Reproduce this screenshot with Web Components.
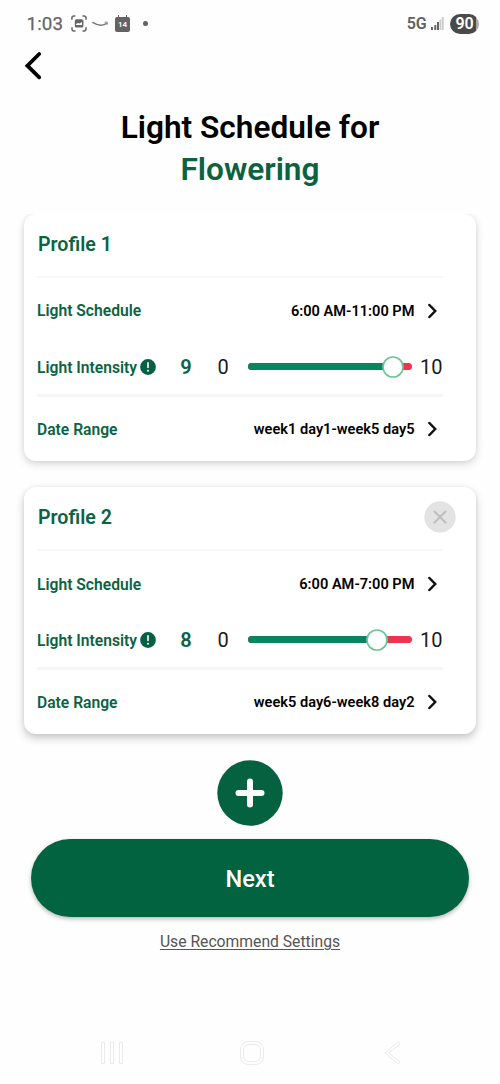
<!DOCTYPE html>
<html lang="en">
<head>
<meta charset="utf-8">
<title>Light Schedule</title>
<style>
html,body{margin:0;background:#fefefe}
body{font-family:Roboto,"Liberation Sans",sans-serif;color:#000}
</style>
</head>
<body>
<light-app></light-app>
<script>
const define = (name, html, setup) => customElements.define(name, class extends HTMLElement {
  constructor() {
    super();
    const t = document.createElement('template');
    t.innerHTML = html;
    this.attachShadow({mode: 'open'}).appendChild(t.content.cloneNode(true));
  }
  connectedCallback() { if (setup) setup(this, this.shadowRoot); }
});

define('status-bar', `<style>
:host{display:flex;box-sizing:border-box;height:47px;padding:0 21px 0 26.500px;align-items:center;color:#666}
.time{font-size:18.800px;line-height:20px;width:44.500px;letter-spacing:.1px;white-space:nowrap;-webkit-text-stroke:.25px #666}
svg{display:block;flex:none}
.net{margin-left:auto;font-size:16px;font-weight:600;line-height:20px;letter-spacing:-.2px;color:#606060}
.cal{display:flex;flex:none;box-sizing:border-box;width:15px;height:15px;margin:1px 0 0 6px;padding-top:1px;border-radius:2px;background:#636363;color:#fff;font-size:8px;font-weight:600;align-items:center;justify-content:center;position:relative}
.cal::before{content:"";position:absolute;left:3px;right:3px;top:-1.5px;height:2px;border:solid #636363;border-width:0 1.5px}
.dot{width:5.500px;height:5.500px;border-radius:50%;background:#636363;margin-left:12.500px}
.bat{display:flex;flex:none;box-sizing:border-box;width:29px;height:20px;margin-left:6px;border-radius:10px;background:linear-gradient(90deg,#4a4a4a 26px,#aaa 26px);color:#fff;font-size:16px;font-weight:600;align-items:center;justify-content:center;letter-spacing:-.1px}
</style>
<span class="time">1:03</span>
<svg width="16" height="17" viewBox="0 0 16 17" fill="none" stroke="#666" stroke-width="1.5" stroke-linecap="round"><path d="M.9 4.2V3q0-2 2-2h1M12 1h1q2 0 2 2v1.2M15 12.8V14q0 2-2 2h-1M4 16H3q-2 0-2-2v-1.2"/><rect x="3.8" y="4.2" width="8.6" height="8.4" rx="1.5" fill="#666" stroke="none"/><path d="M5 10V9l2-1 1.7.5L11 7v3z" fill="#fff" stroke="none"/></svg>
<svg style="margin-left:5px" width="17" height="7" viewBox="0 0 17 7" fill="none" stroke="#777" stroke-linecap="round"><path d="M.8 2.400Q8 7.4 14.3 3.6" stroke-width="1.4"/><path d="M13 2.200q3.800-1.200 2.200 2.200" stroke-width=".9"/></svg>
<span class="cal">14</span><span class="dot"></span>
<span class="net">5G</span>
<svg style="margin-left:4.500px" width="13" height="13" viewBox="0 0 13 13"><path d="M0 10h2v3H0zM3.300 8h2v5h-2zM6 5h2v8H6z" fill="#666"/><path d="M8.500 2.500h1.700V13H8.500zM10.800 0h1.900v13h-1.900z" fill="#ccc"/></svg>
<span class="bat">90</span>`);

define('back-bar', `<style>:host{display:flex;height:54px;padding-left:24px}svg{display:block;margin-top:4px}</style>
<svg width="20" height="30" viewBox="0 0 20 30" fill="none" stroke="#000" stroke-width="3.800" stroke-linecap="round" stroke-linejoin="miter"><path d="M15.200 3L3.400 14.700 15.200 26.300"/></svg>`);

define('page-title', `<style>
:host{display:block;height:113px;padding-top:5.500px;box-sizing:border-box;text-align:center;font-size:31.600px;font-weight:600;line-height:42.400px;white-space:nowrap}
.s{color:#0a6241;display:block}.m{display:block}</style>
<span class="m"><slot></slot></span><span class="s"><slot name="stage"></slot></span>`);

define('icon-chevron', `<style>:host{display:block;width:10px;height:16px;flex:none}svg{display:block}</style>
<svg width="10" height="16" viewBox="0 0 10 16" fill="none" stroke="#111" stroke-width="2.500" stroke-linecap="round"><path d="M1.400 2L7.200 8 1.400 14"/></svg>`);

define('intensity-slider', `<style>
:host{display:block;width:164px;height:22px;flex:none;position:relative}
.track{height:7px;margin-top:7.500px;border-radius:4px;overflow:hidden;background:#ec3350}
.fill{height:7px;background:#068560}
.thumb{position:absolute;top:0;left:0}
</style><div style="display:flow-root"><div class="track"><div class="fill"></div></div></div>
<svg class="thumb" width="22" height="22" viewBox="0 0 22 22"><circle cx="11" cy="11" r="10" fill="#fff" stroke="#6cc596" stroke-width="1.700"/></svg>`,
(el, r) => {
  const x = 16.400 + (el.getAttribute('value') - 1) * 16.050;
  r.querySelector('.fill').style.width = x + 'px';
  r.querySelector('.thumb').style.left = x - 11 + 'px';
});

define('setting-row', `<style>
:host{display:flex;align-items:center;height:65.500px;width:406px}
.l{color:#0b6344;font-size:15.650px;font-weight:600;white-space:nowrap}
.v{margin-left:auto;font-size:14.600px;font-weight:600;white-space:nowrap}
icon-chevron{margin:0 5px 0 13.500px}
</style><span class="l"><slot name="label"></slot></span><span class="v"><slot></slot></span><icon-chevron></icon-chevron>`);

define('intensity-row', `<style>
:host{display:flex;align-items:center;height:46px;width:406px;margin-bottom:4.500px}
.l{color:#0b6344;font-size:15.650px;font-weight:600;white-space:nowrap;width:103px;padding-top:1px}
.i{display:block;flex:none}
.n{width:30px;margin-left:15px;padding-top:1px;text-align:center;font-size:20px;font-weight:600;color:#0b6344}
.z{width:20px;margin-left:12px;padding-top:1px;text-align:center;font-size:20px;color:#1b1b1b}
.t{font-size:20px;color:#1b1b1b;margin-left:8px;padding-top:1px}
intensity-slider{margin-left:15px}
</style><span class="l">Light Intensity</span>
<svg class="i" width="16" height="16" viewBox="0 0 16 16"><circle cx="8" cy="8" r="7.900" fill="#066141"/><path d="M8 3.800v4.600" stroke="#fff" stroke-width="1.600" stroke-linecap="round"/><circle cx="8" cy="11.700" r="1" fill="#fff"/></svg>
<span class="n"></span><span class="z">0</span><intensity-slider></intensity-slider><span class="t">10</span>`,
(el, r) => {
  const v = el.getAttribute('value');
  r.querySelector('.n').textContent = v;
  const old = r.querySelector('intensity-slider');
  const s = document.createElement('intensity-slider');
  s.setAttribute('value', v);
  old.replaceWith(s);
});

define('profile-card', `<style>
:host{display:block;box-sizing:border-box;height:247px;padding-left:13px;border-radius:12px;background:#fff;box-shadow:0 3px 8px rgba(0,0,0,.16),0 0 4px rgba(0,0,0,.05)}
:host([closable]){box-shadow:0 4px 8px rgba(0,0,0,.22),0 0 4px rgba(0,0,0,.05)}
.h{display:flex;align-items:center;height:61.500px;box-sizing:border-box;padding:0 20.500px 1px 1px;color:#0b6344;font-size:19.600px;font-weight:600}
.x{display:none;margin:-2px 0 0 auto}
:host([closable]) .x{display:block}
.d{width:406px;height:2.500px;background:#f7f7f7}
.last{height:65px}
</style><div class="h"><slot name="name"></slot>
<svg class="x" width="32" height="32" viewBox="0 0 32 32"><circle cx="16" cy="16" r="15.700" fill="#e3e3e3"/><path d="M10 10L22 22M22 10L10 22" stroke="#bdbdbd" stroke-width="1.800"/></svg></div>
<div class="d"></div>
<setting-row><span slot="label">Light Schedule</span><slot name="time"></slot></setting-row>
<slot name="intensity"></slot>
<div class="d"></div>
<setting-row class="last"><span slot="label">Date Range</span><slot name="range"></slot></setting-row>`);

define('profile-list', `<style>:host{display:flex;flex-direction:column;gap:26.300px;box-sizing:border-box;height:546px;overflow:hidden;padding:0 24px}
</style><slot></slot>`);

define('add-button', `<style>:host{display:block;width:66px;height:66px;margin:0 auto}svg{display:block}</style>
<svg width="66" height="66" viewBox="0 0 66 66"><circle cx="33" cy="33" r="32.700" fill="#046240"/><path d="M33 21.500v23M21.500 33h23" stroke="#fff" stroke-width="6" stroke-linecap="round"/></svg>`);

define('next-button', `<style>:host{display:flex;align-items:center;justify-content:center;height:78px;margin:13px 31px 0;border-radius:39px;background:#026340;color:#fff;font-size:23.600px;font-weight:500;box-sizing:border-box;padding-top:2px;box-shadow:0 2px 4px rgba(0,0,0,.28)}</style><slot></slot>`);

define('text-link', `<style>:host{display:block;text-align:center;margin-top:15px;font-size:15.700px;line-height:20px;color:#555}span{text-decoration:underline;text-decoration-thickness:1px;text-underline-offset:2px}</style><span><slot></slot></span>`);

define('nav-bar', `<style>:host{display:flex;height:24px;padding-left:101px;margin-top:89px}svg{display:block;flex:none}.b{margin-left:117px}.c{margin-left:120px}</style>
<svg width="22" height="24" viewBox="0 0 22 24" fill="#fff" stroke="#ebebeb"><path d="M.5 1.500h3v21h-3zM9.500 1.500h3v21h-3zM18.500 1.500h3v21h-3z"/></svg>
<svg class="b" width="24" height="24" viewBox="0 0 24 24" fill="none" stroke="#ebebeb"><rect x=".5" y=".5" width="23" height="23" rx="8"/><rect x="3.500" y="3.500" width="17" height="17" rx="5.500"/></svg>
<svg class="c" width="17" height="24" viewBox="0 0 17 24" fill="none" stroke="#ebebeb"><path d="M14.500 .8L.8 12 14.500 23.200l1.500-2.400L4.500 12 16 3.200z"/></svg>`);

define('light-app', `<style>:host{display:block;width:500px;height:1084px;overflow:hidden;background:#fefefe}</style>
<status-bar></status-bar><back-bar></back-bar>
<page-title>Light Schedule for<span slot="stage">Flowering</span></page-title>
<profile-list>
<profile-card><span slot="name">Profile 1</span><span slot="time">6:00 AM-11:00 PM</span><intensity-row slot="intensity" value="9"></intensity-row><span slot="range">week1 day1-week5 day5</span></profile-card>
<profile-card closable><span slot="name">Profile 2</span><span slot="time">6:00 AM-7:00 PM</span><intensity-row slot="intensity" value="8"></intensity-row><span slot="range">week5 day6-week8 day2</span></profile-card>
</profile-list>
<add-button></add-button><next-button>Next</next-button><text-link>Use Recommend Settings</text-link><nav-bar></nav-bar>`);
</script>
</body>
</html>
